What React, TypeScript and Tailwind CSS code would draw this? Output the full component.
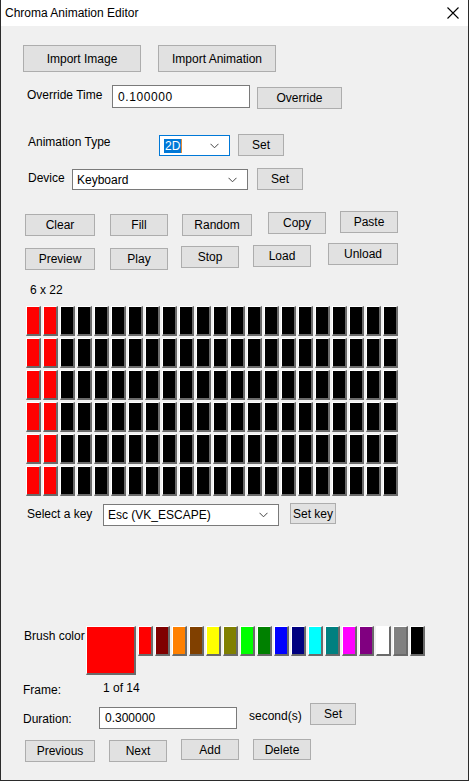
import React from 'react';

const FONT = "font-['Liberation_Sans','Noto_Sans',sans-serif]";

function Btn({ label, className }: { label: string; className: string }) {
  return (
    <div
      className={`flex shrink-0 items-center justify-center whitespace-nowrap border border-[#adadad] bg-[#e1e1e1] text-[12px] leading-none text-black ${className}`}
    >
      {label}
    </div>
  );
}

function Chevron() {
  return (
    <svg width="9" height="6" viewBox="0 0 9 6" className="shrink-0">
      <path d="M0.5 0.8 L4.5 4.8 L8.5 0.8" stroke="#444" strokeWidth="1" fill="none" />
    </svg>
  );
}

function Combo({ children, className }: { children: React.ReactNode; className: string }) {
  return (
    <div className={`flex shrink-0 items-center justify-between whitespace-nowrap bg-white pl-[4px] pr-[10px] text-[12px] ${className}`}>
      <div className="flex items-center">{children}</div>
      <Chevron />
    </div>
  );
}

function Cell({ color }: { color: string }) {
  return (
    <div
      className="h-[30px] w-[15px] border-t border-l border-t-white border-l-white border-r-2 border-b-2 border-r-[#6a6a6a] border-b-[#6a6a6a]"
      style={{ backgroundColor: color }}
    />
  );
}

const palette = [
  '#ff0000', '#800000', '#ff8000', '#804000', '#ffff00', '#808000', '#00ff00', '#008000', '#0000ff',
  '#000080', '#00ffff', '#008080', '#ff00ff', '#800080', '#ffffff', '#808080', '#000000',
];

export default function App() {
  const rows = Array.from({ length: 6 });
  const cols = Array.from({ length: 22 });

  return (
    <div className={`h-[781px] w-[469px] overflow-hidden whitespace-nowrap border-x border-b border-[#2b2b2b] bg-[#f0f0f0] text-black ${FONT}`}>
      {/* title bar */}
      <div className="flex h-[26px] items-center justify-between bg-white pl-[4px] pr-[9px]">
        <span className="text-[12px]">Chroma Animation Editor</span>
        <svg width="12" height="12" viewBox="0 0 12 12">
          <path d="M0.5 0.5 L11.5 11.5 M11.5 0.5 L0.5 11.5" stroke="#000" strokeWidth="1.1" />
        </svg>
      </div>

      {/* import */}
      <div className="mt-[19px] flex h-[27px] items-start">
        <Btn label="Import Image" className="ml-[22px] h-[27px] w-[118px]" />
        <Btn label="Import Animation" className="ml-[17px] h-[27px] w-[118px]" />
      </div>

      {/* override */}
      <div className="mt-[13px] flex h-[24px] items-start text-[12px]">
        <span className="ml-[26px] mt-[2px] w-[85px] leading-[16px]">Override Time</span>
        <div className="flex h-[23px] w-[138px] items-center border border-[#7a7a7a] bg-white pl-[5px] tracking-[0.6px]">0.100000</div>
        <Btn label="Override" className="ml-[7px] mt-[2px] h-[22px] w-[85px]" />
      </div>

      {/* animation type */}
      <div className="mt-[25px] flex h-[22px] items-start text-[12px]">
        <span className="ml-[27px] mt-0 w-[131px] leading-[16px]">Animation Type</span>
        <Combo className="mt-[1px] h-[21px] w-[71px] border border-[#0078d7]">
          <span className="bg-[#0078d7] px-[1px] leading-[14px] text-white">2D</span>
          <span className="h-[14px] w-[1px] bg-[#d98a3a]" />
        </Combo>
        <Btn label="Set" className="ml-[8px] h-[22px] w-[46px]" />
      </div>

      {/* device */}
      <div className="mt-[12px] flex h-[22px] items-start text-[12px]">
        <span className="ml-[27px] mt-[2px] w-[44px] leading-[16px]">Device</span>
        <Combo className="mt-[1px] h-[21px] w-[176px] border border-[#7a7a7a]">
          <span>Keyboard</span>
        </Combo>
        <Btn label="Set" className="ml-[9px] h-[22px] w-[46px]" />
      </div>

      {/* edit buttons */}
      <div className="mt-[21px] flex h-[25px] items-start">
        <Btn label="Clear" className="ml-[24px] mt-[3px] h-[22px] w-[70px]" />
        <Btn label="Fill" className="ml-[15px] mt-[3px] h-[22px] w-[58px]" />
        <Btn label="Random" className="ml-[14px] mt-[3px] h-[22px] w-[70px]" />
        <Btn label="Copy" className="ml-[16px] mt-[1px] h-[22px] w-[58px]" />
        <Btn label="Paste" className="ml-[14px] h-[22px] w-[58px]" />
      </div>
      <div className="mt-[7px] flex h-[27px] items-start">
        <Btn label="Preview" className="ml-[24px] mt-[5px] h-[22px] w-[70px]" />
        <Btn label="Play" className="ml-[15px] mt-[5px] h-[22px] w-[58px]" />
        <Btn label="Stop" className="ml-[13px] mt-[3px] h-[22px] w-[58px]" />
        <Btn label="Load" className="ml-[14px] mt-[2px] h-[22px] w-[58px]" />
        <Btn label="Unload" className="ml-[17px] h-[22px] w-[70px]" />
      </div>

      <div className="ml-[29px] mt-[12px] text-[12px] leading-[16px]">6 x 22</div>

      {/* key grid */}
      <div className="ml-[25px] mt-[8px] flex flex-col gap-[2px]">
        {rows.map((_, r) => (
          <div key={r} className="flex gap-[2px]">
            {cols.map((_, c) => (
              <Cell key={c} color={c < 2 ? '#ff0000' : '#000000'} />
            ))}
          </div>
        ))}
      </div>

      {/* select key */}
      <div className="mt-[7px] flex h-[23px] items-start text-[12px]">
        <span className="ml-[26px] mt-[3px] w-[76px] leading-[16px]">Select a key</span>
        <Combo className="mt-[1px] h-[22px] w-[176px] border border-[#7a7a7a]">
          <span>Esc (VK_ESCAPE)</span>
        </Combo>
        <Btn label="Set key" className="ml-[11px] h-[21px] w-[46px]" />
      </div>

      {/* brush */}
      <div className="mt-[100px] flex h-[49px] items-start text-[12px]">
        <span className="ml-[23px] mt-[2px] w-[62px] leading-[16px]">Brush color</span>
        <div className="h-[49px] w-[50px] border-t border-l border-t-white border-l-white border-r-2 border-b-2 border-r-[#6a6a6a] border-b-[#6a6a6a] bg-[#ff0000]" />
        <div className="ml-[2px] flex gap-[2px]">
          {palette.map((p) => (
            <Cell key={p} color={p} />
          ))}
        </div>
      </div>

      {/* frame */}
      <div className="mt-[5px] flex h-[18px] items-start text-[12px] leading-[16px]">
        <span className="ml-[22px] mt-[2px] w-[80px]">Frame:</span>
        <span>1 of 14</span>
      </div>

      {/* duration */}
      <div className="mt-[5px] flex h-[26px] items-start text-[12px]">
        <span className="ml-[22px] mt-[8px] w-[76px] leading-[16px]">Duration:</span>
        <div className="mt-[4px] flex h-[22px] w-[138px] items-center border border-[#7a7a7a] bg-white pl-[5px]">0.300000</div>
        <span className="ml-[12px] mt-[5px] w-[61px] leading-[16px]">second(s)</span>
        <Btn label="Set" className="h-[22px] w-[46px]" />
      </div>

      {/* frame nav */}
      <div className="mt-[10px] flex h-[23px] items-start">
        <Btn label="Previous" className="ml-[24px] mt-[1px] h-[22px] w-[70px]" />
        <Btn label="Next" className="ml-[14px] mt-[1px] h-[22px] w-[58px]" />
        <Btn label="Add" className="ml-[14px] h-[21px] w-[58px]" />
        <Btn label="Delete" className="ml-[14px] h-[21px] w-[58px]" />
      </div>
    </div>
  );
}
